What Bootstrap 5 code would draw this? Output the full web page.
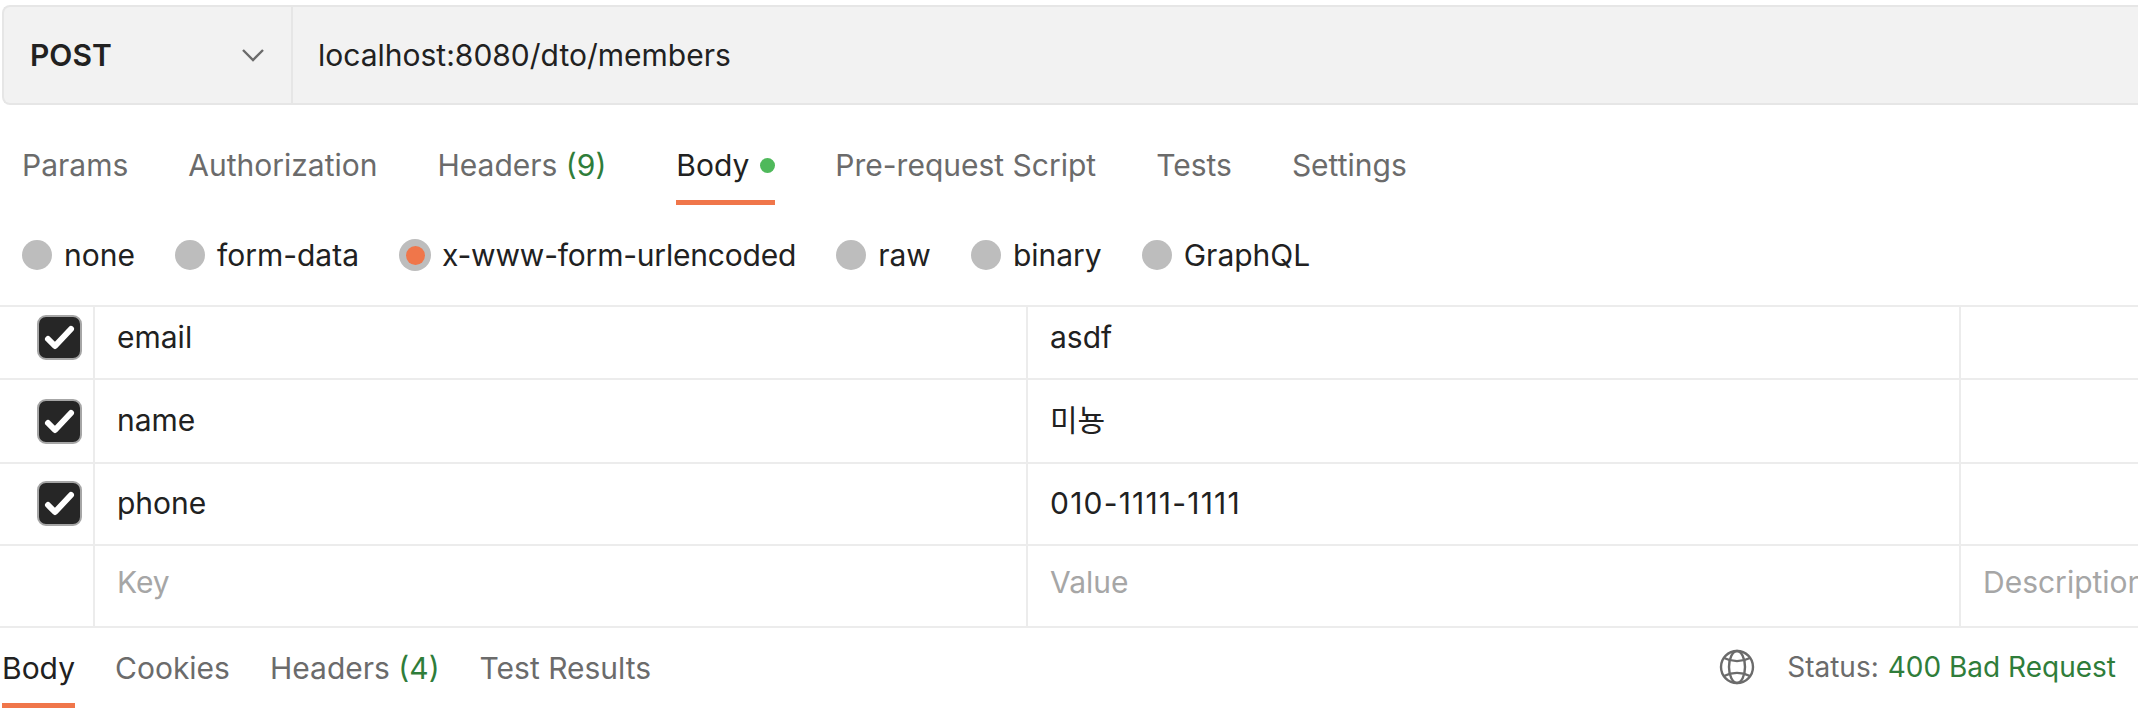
<!doctype html>
<html lang="en">
<head>
<meta charset="utf-8">
<title>Request</title>
<link href="https://cdn.jsdelivr.net/npm/bootstrap@5.3.0/dist/css/bootstrap.min.css" rel="stylesheet">
<style>
html,body{height:724px;overflow:hidden;background:#fff}
body{font-family:Inter,"Noto Sans CJK KR",sans-serif;font-size:30px;line-height:40px;color:#212121;-webkit-font-smoothing:antialiased}
.url-bar{height:100px;margin:5px 0 0 2px;background:#f2f2f2;border:2px solid #e6e6e6;border-right:0;border-radius:8px 0 0 8px}
.method{width:289px;padding:0 26px 0 26px;border-right:2px solid #e6e6e6;font-weight:600}
.url-text{padding-left:25px}
.req-tabs{height:100px;padding-left:22px;gap:60px}
.tab-item{height:100px;padding-top:40px;color:#6b6b6b;white-space:nowrap;position:relative}
.tab-item.on{color:#212121;margin-left:10px}
.tab-item.on::after{content:"";position:absolute;left:0;right:0;bottom:0;height:5px;background:#f0764a}
.tab-count{color:#2f7d3a}
.dot-ok{display:inline-block;width:15px;height:15px;border-radius:50%;background:#4fb95b;margin-left:11px;vertical-align:3px}
.body-types{height:100px;padding-left:22px;gap:40px}
.radio-opt{gap:12px;white-space:nowrap;line-height:30px}
.radio-opt.sel-opt{gap:11px;letter-spacing:-.2px}
.radio-mark{width:30px;height:30px;border-radius:50%;background:#bdbdbd;flex:none}
.radio-mark.sel{width:32px;height:32px;display:flex;align-items:center;justify-content:center}
.radio-mark.sel::before{content:"";width:19px;height:19px;border-radius:50%;background:#f0764a}
.kv-table{border-top:2px solid #ececec}
.kv-row{border-bottom:2px solid #ececec}
.kv-a{height:73px}.kv-b{height:84px}.kv-c{height:82px}.kv-d{height:82px}
.kv-a>*{padding-bottom:11px}.kv-b>.kv-cell{padding-bottom:2px}.kv-c>*{padding-bottom:2px}.kv-d>*{padding-bottom:8px}
.kv-check{width:95px;flex:none;border-right:2px solid #ececec}
.kv-cell{width:933px;flex:none;padding-left:22px;border-right:2px solid #ececec}
.kv-last{flex:1;padding-left:22px;overflow:hidden;white-space:nowrap}
.kv-ph{color:#a6a6a6}
.digits-wide{letter-spacing:1.2px}
.check-box{width:45px;height:45px;margin-left:37px;background:#262626;border:2px solid #a6a6a6;border-radius:9px}
.check-box svg{width:41px;height:41px;display:block}
.resp-bar{height:82px;padding-right:22px}
.resp-tabs{gap:40px;padding-left:2px}
.resp-tab{height:82px;padding-top:20px;color:#6b6b6b;position:relative;white-space:nowrap}
.resp-tab.on{color:#212121}
.resp-tab.on::after{content:"";position:absolute;left:0;right:0;top:75px;height:5px;background:#f0764a}
.status-wrap{font-size:28px;padding-bottom:4px}
.status-label{color:#6b6b6b}
.status-val{color:#2f7d3a;margin-left:9px}
.globe{width:36px;height:36px;margin-right:32px;flex:none}
</style>
</head>
<body>
<div class="url-bar d-flex align-items-stretch">
  <div class="method d-flex align-items-center justify-content-between">
    <span>POST</span>
    <svg width="24" height="14" viewBox="0 0 24 14" fill="none" stroke="#6b6b6b" stroke-width="2.4"><path d="M2 2l10 10L22 2"/></svg>
  </div>
  <div class="url-text d-flex align-items-center">localhost:8080/dto/members</div>
</div>
<div class="req-tabs d-flex">
  <div class="tab-item">Params</div>
  <div class="tab-item">Authorization</div>
  <div class="tab-item">Headers <span class="tab-count">(9)</span></div>
  <div class="tab-item on">Body<span class="dot-ok"></span></div>
  <div class="tab-item">Pre-request Script</div>
  <div class="tab-item">Tests</div>
  <div class="tab-item">Settings</div>
</div>
<div class="body-types d-flex align-items-center">
  <div class="radio-opt d-flex align-items-center"><span class="radio-mark"></span>none</div>
  <div class="radio-opt d-flex align-items-center"><span class="radio-mark"></span>form-data</div>
  <div class="radio-opt sel-opt d-flex align-items-center"><span class="radio-mark sel"></span>x-www-form-urlencoded</div>
  <div class="radio-opt d-flex align-items-center"><span class="radio-mark"></span>raw</div>
  <div class="radio-opt d-flex align-items-center"><span class="radio-mark"></span>binary</div>
  <div class="radio-opt d-flex align-items-center"><span class="radio-mark"></span>GraphQL</div>
</div>
<div class="kv-table">
  <div class="kv-row kv-a d-flex">
    <div class="kv-check d-flex align-items-center"><span class="check-box"><svg viewBox="2 2 41 41" fill="none" stroke="#fff" stroke-width="6" stroke-linecap="round" stroke-linejoin="round"><path d="M11 24l7 7L34 14"/></svg></span></div>
    <div class="kv-cell d-flex align-items-center">email</div>
    <div class="kv-cell d-flex align-items-center">asdf</div>
    <div class="kv-last"></div>
  </div>
  <div class="kv-row kv-b d-flex">
    <div class="kv-check d-flex align-items-center"><span class="check-box"><svg viewBox="2 2 41 41" fill="none" stroke="#fff" stroke-width="6" stroke-linecap="round" stroke-linejoin="round"><path d="M11 24l7 7L34 14"/></svg></span></div>
    <div class="kv-cell d-flex align-items-center">name</div>
    <div class="kv-cell d-flex align-items-center">미뇽</div>
    <div class="kv-last"></div>
  </div>
  <div class="kv-row kv-c d-flex">
    <div class="kv-check d-flex align-items-center"><span class="check-box"><svg viewBox="2 2 41 41" fill="none" stroke="#fff" stroke-width="6" stroke-linecap="round" stroke-linejoin="round"><path d="M11 24l7 7L34 14"/></svg></span></div>
    <div class="kv-cell d-flex align-items-center">phone</div>
    <div class="kv-cell d-flex align-items-center digits-wide">010-1111-1111</div>
    <div class="kv-last"></div>
  </div>
  <div class="kv-row kv-d d-flex">
    <div class="kv-check"></div>
    <div class="kv-cell d-flex align-items-center kv-ph">Key</div>
    <div class="kv-cell d-flex align-items-center kv-ph">Value</div>
    <div class="kv-last d-flex align-items-center kv-ph">Description</div>
  </div>
</div>
<div class="resp-bar d-flex justify-content-between">
  <div class="resp-tabs d-flex">
    <div class="resp-tab on">Body</div>
    <div class="resp-tab">Cookies</div>
    <div class="resp-tab">Headers <span class="tab-count">(4)</span></div>
    <div class="resp-tab">Test Results</div>
  </div>
  <div class="status-wrap d-flex align-items-center">
    <svg class="globe" viewBox="0 0 36 36" fill="none" stroke="#6b6b6b" stroke-width="2.4"><circle cx="18" cy="18" r="16"/><ellipse cx="18" cy="18" rx="8" ry="16"/><path d="M5 9c8 4 18 4 26 0M5 27c8-4 18-4 26 0"/></svg>
    <span class="status-label">Status:</span><span class="status-val">400 Bad Request</span>
  </div>
</div>
<script src="https://cdn.jsdelivr.net/npm/bootstrap@5.3.0/dist/js/bootstrap.bundle.min.js"></script>
</body>
</html>
